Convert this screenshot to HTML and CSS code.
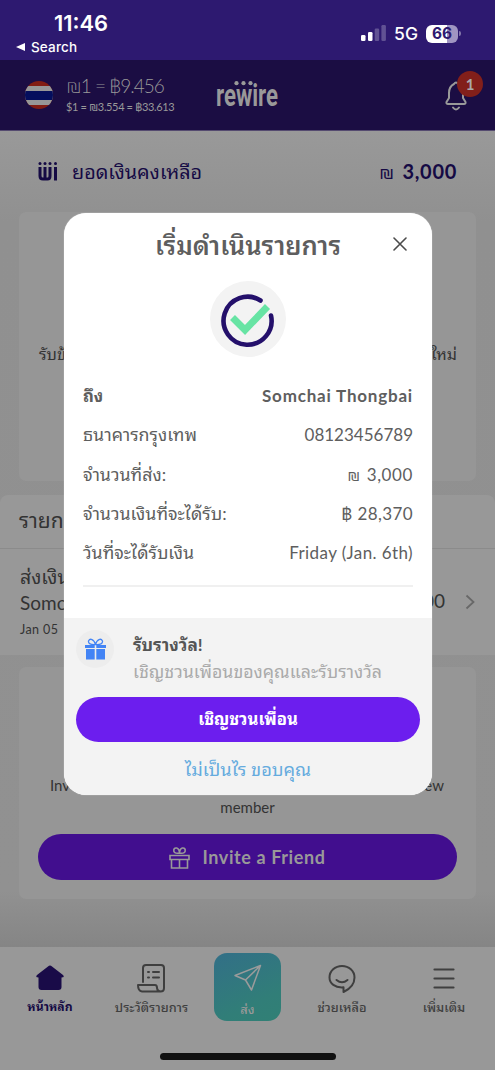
FILE: index.html
```html
<!DOCTYPE html>
<html lang="th">
<head>
<meta charset="utf-8">
<title>Rewire</title>
<link rel="stylesheet" href="styles.css">
</head>
<body>
<div class="phone">
  <div class="status">
    <div class="status-left">
      <span class="time">11:46</span>
      <span class="back"><svg width="10" height="10" viewBox="0 0 10 10"><path d="M0 5 9 1V9Z" fill="#fff"/></svg>Search</span>
    </div>
    <div class="status-right">
      <svg width="25" height="17" viewBox="0 0 25 17"><g fill="#fff"><rect y="10" width="4.5" height="6" rx="1.3"/><rect x="7" y="7" width="4.5" height="9" rx="1.3"/><rect x="13.7" y="3.5" width="4.5" height="12.5" rx="1.3" opacity=".25"/><rect x="20.4" width="4.5" height="16" rx="1.3" opacity=".25"/></g></svg>
      <span class="network">5G</span>
      <span class="battery">66</span><i class="battery-tip"></i>
    </div>
  </div>

  <header class="header">
    <svg class="flag" width="28" height="28" viewBox="0 0 28 28"><defs><clipPath id="disc"><circle cx="14" cy="14" r="14"/></clipPath></defs><g clip-path="url(#disc)"><path fill="#821d13" d="M0 0h28v28H0z"/><path fill="#979797" d="M0 5h28v19H0z"/><path fill="#040e5d" d="M0 10h28v9H0z"/></g></svg>
    <div class="rates"><span class="rate-main">₪1 = ฿9.456</span><span class="rate-sub">$1 = ₪3.554 = ฿33.613</span></div>
    <svg class="logo" width="64" height="38" viewBox="0 -4 64 38"><text class="logo-text" x="0" y="26" textLength="62" lengthAdjust="spacingAndGlyphs">rewire</text><g fill="#999"><circle cx="20.500" cy="3.200" r="2.100"/><circle cx="27.500" cy="3.200" r="2.100"/><circle cx="34.500" cy="3.200" r="2.100"/></g></svg>
    <div class="bell">
      <svg width="22" height="30" viewBox="0 0 22 30" fill="none" stroke="#999" stroke-width="2" stroke-linecap="round" stroke-linejoin="round"><path d="M9 3Q11 0 13 3C17 5 18 8 18 12V17L20.5 21Q21 23 19 23H3Q1 23 1.500 21L4 17V12C4 8 5 5 9 3ZM8 26.500Q11 30.500 14 26.500"/></svg>
      <span class="badge">1</span>
    </div>
  </header>

  <main class="page">
    <section class="balance">
      <svg width="20" height="19" viewBox="0 0 20 19"><g fill="none" stroke="#150a44" stroke-width="3"><path d="M2 5V14Q2 17 5 17H9.500Q12 17 12 14V5M7 5V17M17.500 5V18.500"/></g><g fill="#150a44"><circle cx="2" cy="1.600" r="1.500"/><circle cx="7" cy="1.600" r="1.500"/><circle cx="12" cy="1.600" r="1.500"/><circle cx="17.500" cy="1.600" r="1.500"/></g></svg>
      <span class="balance-label">ยอดเงินคงเหลือ</span>
      <span class="balance-value"><span class="shekel">₪</span> 3,000</span>
    </section>
    <section class="notice"><span>รับข้</span><span>ใหม่</span></section>
    <section class="history">
      <h2 class="history-title">รายก</h2>
      <div class="transaction">
        <div class="transaction-info"><span class="t-kind">ส่งเงิน</span><span class="t-name">Somc</span><span class="t-date">Jan 05</span></div>
        <span class="t-amount">00</span>
        <svg width="11" height="16" viewBox="0 0 11 16" fill="none" stroke="#686868" stroke-width="1.800"><path d="M1.500 1.500 8.500 8 1.500 14.500"/></svg>
      </div>
    </section>
    <section class="invite">
      <div class="invite-line"><span>Inv</span><span>ew</span></div>
      <div class="invite-member">member</div>
      <div class="invite-button">
        <svg width="21" height="23" viewBox="0 0 21 23" fill="none" stroke="#999" stroke-width="1.600"><path d="M1 9.500h19v4H1zM2.500 13.500h16V22h-16zM10.500 13.500V22M10.500 7C6 8 4.500 6 4.800 3.800C5.500 1 10 1 10.500 7C15 8 16.500 6 16.200 3.800C15.500 1 11 1 10.500 7"/></svg>
        <span>Invite a Friend</span>
      </div>
    </section>
  </main>

  <nav class="tabs">
    <div class="tab tab-active"><svg width="30" height="30" viewBox="0 0 30 30"><path d="M15 2.500Q16 2.500 17 3.500L28 12Q30 14.500 26.500 14.500V24Q26.500 27 23.500 27H6.500Q3.500 27 3.500 24V14.500Q0 14.500 2 12L13 3.500Q14 2.500 15 2.500Z" fill="#190b48"/></svg><span>หน้าหลัก</span></div>
    <div class="tab tab-history"><svg width="30" height="30" viewBox="0 0 30 30" fill="none" stroke="#3f3f3f" stroke-width="2" stroke-linecap="round" stroke-linejoin="round"><path d="M6 19V5Q6 2 9 2H24Q27 2 27 5V25Q27 28.500 23.500 28.500H5Q1 28 1 22H18Q20 22 20 25Q20.500 28.500 24 28.500M11 9h1M16 9h6M11 14.500h1M16 14.500h6"/></svg><span>ประวัติรายการ</span></div>
    <div class="tab-send"><svg width="28" height="28" viewBox="0 0 28 28" fill="none" stroke="#9b9b9b" stroke-width="1.500" stroke-linejoin="round"><path d="M1 11.500 26.500 1.500 17.500 26 11.500 16ZM11.500 16 26.500 1.500"/></svg><span>ส่ง</span></div>
    <div class="tab tab-help"><svg width="30" height="30" viewBox="0 0 30 30" fill="none" stroke="#3f3f3f" stroke-width="2" stroke-linecap="round" stroke-linejoin="round"><path d="M16.500 24.300V29C23 26 27.500 21 27.500 14.500C27.500 8 22 3 15 3S2.500 8 2.500 14.500C2.500 20.500 8 25 16.500 24.300ZM9.500 17Q15 21.500 20.500 17"/></svg><span>ช่วยเหลือ</span></div>
    <div class="tab tab-more"><svg width="30" height="30" viewBox="0 0 30 30" stroke="#3f3f3f" stroke-width="2.200" stroke-linecap="round"><path d="M5.500 6.500h19M5.500 15.500h19M5.500 24.500h19"/></svg><span>เพิ่มเติม</span></div>
    <i class="home-bar"></i>
  </nav>

  <div class="modal">
    <div class="modal-head"><h1>เริ่มดำเนินรายการ</h1><svg class="close" width="14" height="14" viewBox="0 0 14 14" stroke="#4b4b4b" stroke-width="1.600" stroke-linecap="round"><path d="M1 1 13 13M13 1 1 13"/></svg></div>
    <svg class="success" width="76" height="76" viewBox="0 0 76 76"><circle cx="38" cy="38" r="38" fill="#f3f3f3"/><path d="M50.500 19.500A24 24 0 1 0 61 34.500" fill="none" stroke="#24106b" stroke-width="4.600" stroke-linecap="round"/><path d="M22.500 36.500 35 49 57.500 25.500" fill="none" stroke="#67e4a4" stroke-width="7"/></svg>
    <div class="details">
      <div class="row strong"><span>ถึง</span><span class="recipient">Somchai Thongbai</span></div>
      <div class="row"><span class="label">ธนาคารกรุงเทพ</span><span>08123456789</span></div>
      <div class="row"><span class="label">จำนวนที่ส่ง:</span><span class="amount"><span class="shekel">₪</span> 3,000</span></div>
      <div class="row"><span class="label">จำนวนเงินที่จะได้รับ:</span><span class="spaced">฿ 28,370</span></div>
      <div class="row"><span class="label">วันที่จะได้รับเงิน</span><span class="spaced">Friday (Jan. 6th)</span></div>
    </div>
    <div class="reward">
      <div class="reward-info">
        <span class="gift"><svg width="21" height="22" viewBox="0 0 21 22"><path fill="#4384f5" d="M0 7h9.700v3H0zM11.300 7H21v3H11.300zM1 11h8.700v10.500H1zM11.300 11H20v10.500H11.300z"/><path d="M10.500 6.500Q3 7 3.500 3C5 0 9 1 10.500 6.500Q18 7 17.500 3C16 0 12 1 10.500 6.500" fill="none" stroke="#4384f5" stroke-width="1.300"/></svg></span>
        <div class="reward-copy"><strong>รับรางวัล!</strong><span>เชิญชวนเพื่อนของคุณและรับรางวัล</span></div>
      </div>
      <div class="primary"><span>เชิญชวนเพื่อน</span></div>
      <div class="dismiss"><span>ไม่เป็นไร ขอบคุณ</span></div>
    </div>
  </div>
</div>
</body>
</html>
```
FILE: styles.css
```css
* { box-sizing: border-box; }
body { margin: 0; font-family: Lato, "Noto Sans Thai Looped", Loma, Garuda, Waree, "Noto Sans Thai", "Noto Sans", sans-serif; }
svg { display: block; flex: none; }
span, h1, h2, strong { white-space: nowrap; }
.phone { position: relative; width: 495px; height: 1070px; display: flex; flex-direction: column; overflow: hidden; background: #929292; }
.status { height: 60px; flex: none; display: flex; justify-content: space-between; background: #2d1970; color: #fff; font-family: Inter, sans-serif; }
.status-left { display: flex; flex-direction: column; padding: 10px 0 0 16px; }
.time { font-size: 21.900px; line-height: 26px; font-weight: 600; padding-left: 38px; }
.back { display: flex; align-items: center; gap: 5px; font-size: 13.5px; line-height: 22px; font-weight: 500; letter-spacing: .15px; }
.status-right { display: flex; align-items: center; height: 17px; margin-top: 25px; padding-right: 34px; }
.network { font-size: 17.5px; font-weight: 500; margin: 0 8px; }
.battery { width: 32px; height: 18px; border-radius: 6px; background: linear-gradient(90deg, #fff 66%, #a095c2 66%); color: #2d1970; font-size: 15.500px; line-height: 18px; font-weight: 700; text-align: center; }
.battery-tip { width: 2px; height: 5px; margin-left: 1px; border-radius: 0 2px 2px 0; background: #8175a9; }
.header { height: 71px; flex: none; display: flex; padding-left: 25px; background: #1b0d43; border-bottom: 1px solid #554b70; color: #999; }
.flag { margin-top: 21px; }
.rates { width: 150px; margin: 14px 0 0 13px; display: flex; flex-direction: column; }
.rate-main { height: 24px; line-height: 24px; font-size: 19px; font-weight: 300; letter-spacing: -1px; }
.rate-sub { height: 18px; line-height: 18px; font-size: 11px; letter-spacing: -.37px; }
.logo { margin-top: 16px; overflow: visible; }
.logo-text { font: 700 31px Roboto, sans-serif; fill: #999; }
.bell { position: relative; margin: 21px 0 0 165px; width: 22px; height: 30px; }
.badge { position: absolute; left: 12px; top: -10px; width: 26px; height: 26px; border-radius: 50%; background: #821f1a; color: #aaa; font-size: 15px; line-height: 26px; font-weight: 700; text-align: center; }
.page { flex: 1; display: flex; flex-direction: column; background: linear-gradient(#999, #909090 90px, #919191 760px, #858585); color: #333; }
.balance { height: 81px; display: flex; align-items: center; padding: 0 38px; color: #150a44; }
.balance-label { margin: -4px 0 0 14px; font-size: 19.800px; }
.balance-value { margin: -2px 0 0 auto; font-size: 20px; font-weight: 700; letter-spacing: .7px; word-spacing: 2px; }
.shekel { font-weight: 400; font-size: .9em; }
.notice { height: 269px; margin: 0 19px; padding: 130px 19px 0 20px; display: flex; justify-content: space-between; border-radius: 7px; background: #969696; font-size: 16px; line-height: 24px; }
.history { height: 160px; margin-top: 14px; border-radius: 8px 8px 0 0; background: #989898; }
.history-title { height: 54px; margin: 0; padding-left: 19px; border-bottom: 1px solid #8b8b8b; font-size: 21px; font-weight: 400; line-height: 49px; }
.transaction { display: flex; align-items: center; height: 106px; padding: 0 19px 0 20px; }
.transaction-info { display: flex; flex-direction: column; width: 45px; }
.t-kind { height: 27px; line-height: 27px; font-size: 19.500px; }
.t-name { height: 25px; line-height: 25px; font-size: 19px; }
.t-date { height: 26px; line-height: 29px; font-size: 12.500px; letter-spacing: .4px; }
.t-amount { margin: -4px 20px 0 auto; font-size: 19px; }
.invite { height: 232px; margin: 12px 19px 0; padding: 107px 19px 0; background: #969696; border-radius: 7px; font-size: 15px; }
.invite-line { display: flex; justify-content: space-between; height: 22px; padding: 0 13px 0 12px; line-height: 22px; }
.invite-member { height: 22px; line-height: 22px; text-align: center; }
.invite-button { display: flex; align-items: center; justify-content: center; gap: 12px; height: 46px; margin-top: 16px; border-radius: 23px; background: #410e8e; color: #999; font-size: 18px; font-weight: 700; letter-spacing: .6px; }
.tabs { position: relative; flex: none; height: 123px; display: flex; padding-top: 6px; background: #989898; color: #3f3f3f; font-size: 12.800px; font-weight: 500; }
.tab { display: flex; flex-direction: column; align-items: center; padding-top: 10px; gap: 3px; }
.tab span, .tab-send span { line-height: 22px; }
.tab-active { width: 100px; color: #150a44; font-weight: 700; font-size: 12.200px; }
.tab-history { width: 103px; }
.tab-send { width: 67px; height: 68px; margin: 0 0 0 11px; display: flex; flex-direction: column; align-items: center; padding-top: 11px; gap: 6px; border-radius: 13px; background: linear-gradient(155deg, #326f87, #317e78 70%, #318075); color: #999; }
.tab-help { width: 122px; }
.tab-more { width: 82px; }
.home-bar { position: absolute; left: 160px; bottom: 10px; width: 176px; height: 7px; border-radius: 4px; background: #111; }
.modal { position: absolute; left: 64px; top: 213px; width: 368px; height: 582px; display: flex; flex-direction: column; border-radius: 22px; background: #fff; color: #5e5e5e; overflow: hidden; box-shadow: 0 0 1px #eee; }
.modal-head { position: relative; height: 68px; flex: none; display: flex; justify-content: center; }
.modal-head h1 { margin: 0; font-size: 25.600px; font-weight: 600; line-height: 64px; }
.close { position: absolute; right: 25px; top: 24px; }
.success { align-self: center; }
.details { margin: 19px 19px 0; height: 211px; flex: none; border-bottom: 2px solid #f0f0f0; font-size: 17px; }
.row { height: 39.300px; display: flex; justify-content: space-between; line-height: 39px; }
.label { font-size: 17.800px; }
.spaced { letter-spacing: .4px; }
.amount { letter-spacing: .6px; word-spacing: 1px; }
.strong { font-weight: 700; }
.recipient { letter-spacing: .8px; }
.reward { height: 177px; margin-top: 31px; flex: none; padding: 12px 12px 0; background: #f3f3f3; }
.reward-info { display: flex; height: 67px; gap: 19px; }
.gift { width: 38px; height: 38px; display: grid; place-items: center; border-radius: 50%; background: #ededed; }
.reward-copy { display: flex; flex-direction: column; font-size: 17.750px; color: #aaa; }
.reward-copy strong { color: #555; height: 28px; line-height: 30px; font-size: 17.200px; }
.reward-copy span { height: 26px; line-height: 26px; }
.primary { height: 45px; border-radius: 23px; background: #6c1eee; color: #fff; text-align: center; line-height: 44px; font-size: 16.700px; font-weight: 700; }
.dismiss { text-align: center; color: #65abde; font-size: 18.200px; line-height: 54px; }
```
